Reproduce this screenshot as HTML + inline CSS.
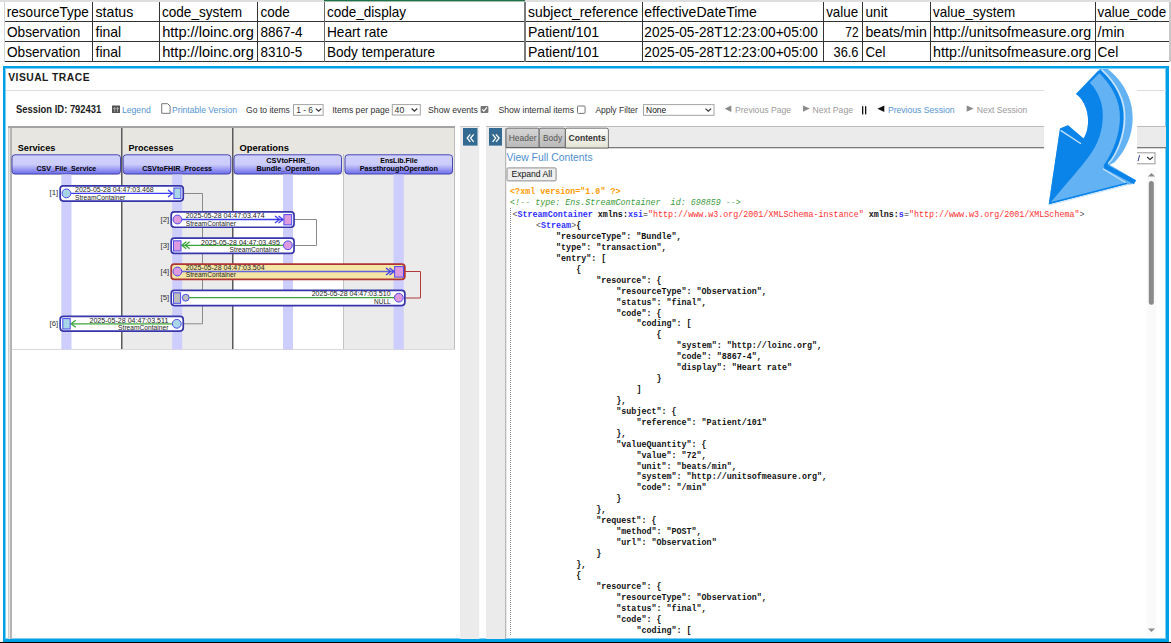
<!DOCTYPE html>
<html><head><meta charset="utf-8"><title>Visual Trace</title>
<style>html,body{margin:0;padding:0;background:#fff;overflow:hidden;} svg{display:block;}</style>
</head><body>
<svg width="1171" height="643" viewBox="0 0 1171 643" style="font-family:'Liberation Sans',sans-serif">
<rect x="0" y="0" width="1171" height="2" fill="#dedede"/>
<rect x="324" y="0" width="201" height="1.3" fill="#1e7145"/>
<rect x="4" y="21" width="1165" height="1" fill="#333333"/>
<rect x="4" y="41" width="1165" height="1" fill="#333333"/>
<rect x="4" y="61" width="1165" height="1" fill="#333333"/>
<rect x="4" y="2" width="1" height="60" fill="#d4d4d4"/>
<rect x="92" y="2" width="1" height="60" fill="#333333"/>
<rect x="159" y="2" width="1" height="60" fill="#333333"/>
<rect x="257" y="2" width="1" height="60" fill="#333333"/>
<rect x="642" y="2" width="1" height="60" fill="#333333"/>
<rect x="823" y="2" width="1" height="60" fill="#333333"/>
<rect x="862" y="2" width="1" height="60" fill="#333333"/>
<rect x="930" y="2" width="1" height="60" fill="#333333"/>
<rect x="1095" y="2" width="1" height="60" fill="#333333"/>
<rect x="324" y="2" width="1" height="60" fill="#6a6a6a"/>
<rect x="524" y="2" width="2" height="60" fill="#7a7a7a"/>
<rect x="1169" y="2" width="2" height="60" fill="#c8c8c8"/>
<text x="6.80" y="17.20" font-family="Liberation Sans" font-size="15" fill="#000" textLength="82.10" lengthAdjust="spacingAndGlyphs">resourceType</text>
<text x="95.50" y="17.20" font-family="Liberation Sans" font-size="15" fill="#000" textLength="37.80" lengthAdjust="spacingAndGlyphs">status</text>
<text x="161.90" y="17.20" font-family="Liberation Sans" font-size="15" fill="#000" textLength="80.20" lengthAdjust="spacingAndGlyphs">code_system</text>
<text x="260.50" y="17.20" font-family="Liberation Sans" font-size="15" fill="#000" textLength="29.30" lengthAdjust="spacingAndGlyphs">code</text>
<text x="326.90" y="17.20" font-family="Liberation Sans" font-size="15" fill="#000" textLength="79.10" lengthAdjust="spacingAndGlyphs">code_display</text>
<text x="528.00" y="17.20" font-family="Liberation Sans" font-size="15" fill="#000" textLength="110.30" lengthAdjust="spacingAndGlyphs">subject_reference</text>
<text x="644.30" y="17.20" font-family="Liberation Sans" font-size="15" fill="#000" textLength="112.60" lengthAdjust="spacingAndGlyphs">effectiveDateTime</text>
<text x="826.20" y="17.20" font-family="Liberation Sans" font-size="15" fill="#000" textLength="31.90" lengthAdjust="spacingAndGlyphs">value</text>
<text x="865.50" y="17.20" font-family="Liberation Sans" font-size="15" fill="#000" textLength="22.00" lengthAdjust="spacingAndGlyphs">unit</text>
<text x="933.10" y="17.20" font-family="Liberation Sans" font-size="15" fill="#000" textLength="82.10" lengthAdjust="spacingAndGlyphs">value_system</text>
<text x="1097.60" y="17.20" font-family="Liberation Sans" font-size="15" fill="#000" textLength="68.60" lengthAdjust="spacingAndGlyphs">value_code</text>
<text x="7.00" y="36.60" font-family="Liberation Sans" font-size="15" fill="#000" textLength="73.40" lengthAdjust="spacingAndGlyphs">Observation</text>
<text x="95.50" y="36.60" font-family="Liberation Sans" font-size="15" fill="#000" textLength="25.70" lengthAdjust="spacingAndGlyphs">final</text>
<text x="162.20" y="36.60" font-family="Liberation Sans" font-size="15" fill="#000" textLength="91.60" lengthAdjust="spacingAndGlyphs">http://loinc.org</text>
<text x="260.50" y="36.60" font-family="Liberation Sans" font-size="15" fill="#000" textLength="42.10" lengthAdjust="spacingAndGlyphs">8867-4</text>
<text x="326.90" y="36.60" font-family="Liberation Sans" font-size="15" fill="#000" textLength="60.90" lengthAdjust="spacingAndGlyphs">Heart rate</text>
<text x="528.00" y="36.60" font-family="Liberation Sans" font-size="15" fill="#000" textLength="71.10" lengthAdjust="spacingAndGlyphs">Patient/101</text>
<text x="644.30" y="36.60" font-family="Liberation Sans" font-size="15" fill="#000" textLength="173.50" lengthAdjust="spacingAndGlyphs">2025-05-28T12:23:00+05:00</text>
<text x="845.30" y="36.60" font-family="Liberation Sans" font-size="15" fill="#000" textLength="13.20" lengthAdjust="spacingAndGlyphs">72</text>
<text x="865.50" y="36.60" font-family="Liberation Sans" font-size="15" fill="#000" textLength="61.30" lengthAdjust="spacingAndGlyphs">beats/min</text>
<text x="933.10" y="36.60" font-family="Liberation Sans" font-size="15" fill="#000" textLength="158.10" lengthAdjust="spacingAndGlyphs">http://unitsofmeasure.org</text>
<text x="1097.60" y="36.60" font-family="Liberation Sans" font-size="15" fill="#000" textLength="26.90" lengthAdjust="spacingAndGlyphs">/min</text>
<text x="7.00" y="56.50" font-family="Liberation Sans" font-size="15" fill="#000" textLength="73.40" lengthAdjust="spacingAndGlyphs">Observation</text>
<text x="95.50" y="56.50" font-family="Liberation Sans" font-size="15" fill="#000" textLength="25.70" lengthAdjust="spacingAndGlyphs">final</text>
<text x="162.20" y="56.50" font-family="Liberation Sans" font-size="15" fill="#000" textLength="91.60" lengthAdjust="spacingAndGlyphs">http://loinc.org</text>
<text x="260.50" y="56.50" font-family="Liberation Sans" font-size="15" fill="#000" textLength="41.70" lengthAdjust="spacingAndGlyphs">8310-5</text>
<text x="326.90" y="56.50" font-family="Liberation Sans" font-size="15" fill="#000" textLength="108.20" lengthAdjust="spacingAndGlyphs">Body temperature</text>
<text x="528.00" y="56.50" font-family="Liberation Sans" font-size="15" fill="#000" textLength="71.10" lengthAdjust="spacingAndGlyphs">Patient/101</text>
<text x="644.30" y="56.50" font-family="Liberation Sans" font-size="15" fill="#000" textLength="173.50" lengthAdjust="spacingAndGlyphs">2025-05-28T12:23:00+05:00</text>
<text x="833.50" y="56.50" font-family="Liberation Sans" font-size="15" fill="#000" textLength="25.00" lengthAdjust="spacingAndGlyphs">36.6</text>
<text x="865.50" y="56.50" font-family="Liberation Sans" font-size="15" fill="#000" textLength="20.00" lengthAdjust="spacingAndGlyphs">Cel</text>
<text x="933.10" y="56.50" font-family="Liberation Sans" font-size="15" fill="#000" textLength="158.10" lengthAdjust="spacingAndGlyphs">http://unitsofmeasure.org</text>
<text x="1097.60" y="56.50" font-family="Liberation Sans" font-size="15" fill="#000" textLength="20.70" lengthAdjust="spacingAndGlyphs">Cel</text>
<rect x="0" y="642" width="1171" height="1" fill="#000"/>
<rect x="3" y="66" width="1166" height="2" fill="#00a0e6"/>
<rect x="5" y="68" width="1161" height="1" fill="#7fcdf2"/>
<rect x="3" y="66" width="2" height="576" fill="#00a0e6"/>
<rect x="5" y="68" width="1" height="571" fill="#7fcdf2"/>
<rect x="1166" y="66" width="3" height="576" fill="#00a0e6"/>
<rect x="1165" y="68" width="1" height="571" fill="#7fcdf2"/>
<rect x="3" y="639" width="1166" height="3" fill="#00a0e6"/>
<rect x="5" y="638" width="1161" height="1" fill="#7fcdf2"/>
<text x="8.2" y="81.0" font-family="Liberation Sans" font-size="10.3" font-weight="bold" fill="#1a1a1a" textLength="81.3" lengthAdjust="spacing">VISUAL TRACE</text>
<rect x="6" y="90" width="1160" height="1" fill="#dddddd"/>
<text x="16.00" y="112.90" font-family="Liberation Sans" font-size="10.1" fill="#222" font-weight="bold" textLength="85.30" lengthAdjust="spacingAndGlyphs">Session ID: 792431</text>
<rect x="112" y="105.5" width="8" height="7.5" fill="#555"/>
<rect x="114.5" y="107" width="0.6" height="5" fill="#ccc"/>
<rect x="117" y="107" width="0.6" height="5" fill="#ccc"/>
<rect x="112.8" y="108.5" width="6.4" height="0.6" fill="#ccc"/>
<text x="121.90" y="112.90" font-family="Liberation Sans" font-size="9.3" fill="#5594d2" textLength="28.90" lengthAdjust="spacingAndGlyphs">Legend</text>
<path d="M161.7,103.7 h6 l2.4,2.4 v7.2 h-8.4 z" fill="#fff" stroke="#777" stroke-width="1"/>
<text x="172.10" y="112.90" font-family="Liberation Sans" font-size="9.3" fill="#5594d2" textLength="64.90" lengthAdjust="spacingAndGlyphs">Printable Version</text>
<text x="246.10" y="112.90" font-family="Liberation Sans" font-size="9.3" fill="#333" textLength="43.80" lengthAdjust="spacingAndGlyphs">Go to items</text>
<rect x="293.5" y="104.6" width="29.600000000000023" height="10.700000000000003" fill="#fff" stroke="#a4a4a4" stroke-width="1"/>
<text x="296.20" y="112.90" font-family="Liberation Sans" font-size="9.3" fill="#333" textLength="16.80" lengthAdjust="spacingAndGlyphs">1 - 6</text>
<path d="M315.8,108.64999999999999 L318.6,111.24999999999999 L321.40000000000003,108.64999999999999" fill="none" stroke="#333" stroke-width="1.2"/>
<text x="332.20" y="112.90" font-family="Liberation Sans" font-size="9.3" fill="#333" textLength="57.40" lengthAdjust="spacingAndGlyphs">Items per page</text>
<rect x="392.3" y="104.6" width="28.0" height="10.400000000000006" fill="#fff" stroke="#a4a4a4" stroke-width="1"/>
<text x="394.60" y="112.90" font-family="Liberation Sans" font-size="9.3" fill="#333" textLength="9.70" lengthAdjust="spacingAndGlyphs">40</text>
<path d="M411.59999999999997,108.5 L414.4,111.1 L417.2,108.5" fill="none" stroke="#333" stroke-width="1.2"/>
<text x="428.00" y="112.90" font-family="Liberation Sans" font-size="9.3" fill="#333" textLength="49.90" lengthAdjust="spacingAndGlyphs">Show events</text>
<rect x="480.6" y="105.9" width="7.8" height="7.2" rx="1" fill="#767676"/>
<path d="M482.2,109.4 L483.8,111.2 L486.9,107.3" fill="none" stroke="#fff" stroke-width="1.1"/>
<text x="498.40" y="112.90" font-family="Liberation Sans" font-size="9.3" fill="#333" textLength="75.60" lengthAdjust="spacingAndGlyphs">Show internal items</text>
<rect x="577.5" y="106" width="7.6" height="7.4" rx="1" fill="#fff" stroke="#767676" stroke-width="1"/>
<text x="595.40" y="112.90" font-family="Liberation Sans" font-size="9.3" fill="#333" textLength="42.40" lengthAdjust="spacingAndGlyphs">Apply Filter</text>
<rect x="643.5" y="104.6" width="70.5" height="10.700000000000003" fill="#fff" stroke="#a4a4a4" stroke-width="1"/>
<text x="646.10" y="112.90" font-family="Liberation Sans" font-size="9.3" fill="#111" textLength="20.10" lengthAdjust="spacingAndGlyphs">None</text>
<path d="M705.5,108.64999999999999 L708.3,111.24999999999999 L711.0999999999999,108.64999999999999" fill="none" stroke="#333" stroke-width="1.2"/>
<path d="M724.7,108.8 L731.3,105.6 L731.3,112 z" fill="#8a8a8a"/>
<text x="735.00" y="112.90" font-family="Liberation Sans" font-size="9.3" fill="#9a9a9a" textLength="56.00" lengthAdjust="spacingAndGlyphs">Previous Page</text>
<path d="M809.8,108.6 L803,105.4 L803,111.8 z" fill="#8a8a8a"/>
<text x="812.50" y="112.90" font-family="Liberation Sans" font-size="9.3" fill="#9a9a9a" textLength="40.60" lengthAdjust="spacingAndGlyphs">Next Page</text>
<rect x="862" y="106.2" width="1.3" height="8.2" fill="#111"/>
<rect x="865" y="106.2" width="1.3" height="8.2" fill="#111"/>
<path d="M877.4,108.8 L884.3,105.6 L884.3,112 z" fill="#111"/>
<text x="887.90" y="112.90" font-family="Liberation Sans" font-size="9.3" fill="#5594d2" textLength="66.60" lengthAdjust="spacingAndGlyphs">Previous Session</text>
<path d="M973.6,108.6 L966.7,105.4 L966.7,111.8 z" fill="#8a8a8a"/>
<text x="976.70" y="112.90" font-family="Liberation Sans" font-size="9.3" fill="#9a9a9a" textLength="50.60" lengthAdjust="spacingAndGlyphs">Next Session</text>
<rect x="8" y="126" width="1" height="513" fill="#cccccc"/>
<rect x="9" y="128" width="1" height="511" fill="#e6e6e6"/>
<rect x="10" y="128" width="2" height="511" fill="#b4b4b4"/>
<rect x="8" y="126" width="447" height="2" fill="#a4a4a4"/>
<rect x="12" y="128" width="442" height="47" fill="#e8e6e1"/>
<rect x="122" y="175" width="110" height="174.5" fill="#ebebeb"/>
<rect x="344" y="175" width="110" height="174.5" fill="#ebebeb"/>
<rect x="343" y="154" width="1" height="195.5" fill="#c4c4c4"/>
<rect x="121" y="128" width="1.5" height="221.5" fill="#5a5a5a"/>
<rect x="232" y="128" width="1.5" height="221.5" fill="#5a5a5a"/>
<rect x="454" y="128" width="1" height="221.5" fill="#bdbdbd"/>
<rect x="12" y="349" width="442" height="1" fill="#dadada"/>
<text x="17.80" y="151.00" font-family="Liberation Sans" font-size="9" fill="#000" font-weight="bold" textLength="37.50" lengthAdjust="spacingAndGlyphs">Services</text>
<text x="128.40" y="151.00" font-family="Liberation Sans" font-size="9" fill="#000" font-weight="bold" textLength="45.00" lengthAdjust="spacingAndGlyphs">Processes</text>
<text x="239.50" y="151.00" font-family="Liberation Sans" font-size="9" fill="#000" font-weight="bold" textLength="49.40" lengthAdjust="spacingAndGlyphs">Operations</text>
<defs><linearGradient id="bx" x1="0" y1="0" x2="0" y2="1"><stop offset="0" stop-color="#d0d0fc"/><stop offset="0.5" stop-color="#cdcdfc"/><stop offset="1" stop-color="#6c6cec"/></linearGradient></defs>
<rect x="12.0" y="154.8" width="108.5" height="19.2" rx="3" fill="url(#bx)" stroke="#4646b4" stroke-width="1"/>
<rect x="123.2" y="154.8" width="107.60000000000001" height="19.2" rx="3" fill="url(#bx)" stroke="#4646b4" stroke-width="1"/>
<rect x="234.0" y="154.8" width="107.5" height="19.2" rx="3" fill="url(#bx)" stroke="#4646b4" stroke-width="1"/>
<rect x="345.0" y="154.8" width="107.5" height="19.2" rx="3" fill="url(#bx)" stroke="#4646b4" stroke-width="1"/>
<text x="36.50" y="171.00" font-family="Liberation Sans" font-size="7.6" fill="#000" font-weight="bold" textLength="59.80" lengthAdjust="spacingAndGlyphs">CSV_File_Service</text>
<text x="142.20" y="171.00" font-family="Liberation Sans" font-size="7.6" fill="#000" font-weight="bold" textLength="69.90" lengthAdjust="spacingAndGlyphs">CSVtoFHIR_Process</text>
<text x="266.30" y="162.90" font-family="Liberation Sans" font-size="7.6" fill="#000" font-weight="bold" textLength="43.30" lengthAdjust="spacingAndGlyphs">CSVtoFHIR_</text>
<text x="256.50" y="171.00" font-family="Liberation Sans" font-size="7.6" fill="#000" font-weight="bold" textLength="63.30" lengthAdjust="spacingAndGlyphs">Bundle_Operation</text>
<text x="380.30" y="162.90" font-family="Liberation Sans" font-size="7.6" fill="#000" font-weight="bold" textLength="37.30" lengthAdjust="spacingAndGlyphs">EnsLib.File</text>
<text x="359.70" y="171.00" font-family="Liberation Sans" font-size="7.6" fill="#000" font-weight="bold" textLength="78.20" lengthAdjust="spacingAndGlyphs">PassthroughOperation</text>
<rect x="61.3" y="174.5" width="10.2" height="175" fill="#cecefe"/>
<rect x="172.2" y="174.5" width="10.0" height="175" fill="#cecefe"/>
<rect x="283" y="174.5" width="10" height="175" fill="#cecefe"/>
<rect x="393.5" y="174.5" width="10.3" height="175" fill="#cecefe"/>
<path d="M183,193.5 H202.5 V323.8 H183" fill="none" stroke="#8a8a8a" stroke-width="1"/>
<path d="M294,219.5 H316.5 V245.5 H294" fill="none" stroke="#8a8a8a" stroke-width="1"/>
<path d="M405,271.5 H420.5 V298 H405" fill="none" stroke="#b23a3a" stroke-width="1"/>
<rect x="60.150000000000006" y="185.85" width="123.09999999999998" height="15.199999999999994" rx="3.2" fill="#fff" stroke="#3636aa" stroke-width="1.7"/>
<path d="M71,193.4 H172.5" stroke="#3d3df0" stroke-width="1.3" fill="none"/>
<path d="M168.0,189.9 L172.5,193.4 L168.0,196.9" stroke="#3d3df0" stroke-width="1.3" fill="none"/>
<circle cx="66.4" cy="193.4" r="4.4" fill="#a9d6e6" stroke="#4a4af0" stroke-width="1"/>
<rect x="173.9" y="188.0" width="7.0" height="10.599999999999994" fill="#a9d6e6" stroke="#4a4af0" stroke-width="1"/>
<text x="75.00" y="192.10" font-family="Liberation Sans" font-size="7.9" fill="#222" textLength="78.70" lengthAdjust="spacingAndGlyphs">2025-05-28 04:47:03.468</text>
<text x="75.00" y="199.50" font-family="Liberation Sans" font-size="7.9" fill="#222" textLength="50.30" lengthAdjust="spacingAndGlyphs">StreamContainer</text>
<text x="49.50" y="195.40" font-family="Liberation Sans" font-size="7.9" fill="#333" textLength="8.70" lengthAdjust="spacingAndGlyphs">[1]</text>
<rect x="171.2" y="211.95" width="122.85" height="15.299999999999988" rx="3.2" fill="#fff" stroke="#3636aa" stroke-width="1.7"/>
<path d="M182,219.5 H283" stroke="#3d3df0" stroke-width="1.3" fill="none"/>
<path d="M278.5,216.0 L283,219.5 L278.5,223.0" stroke="#3d3df0" stroke-width="1.3" fill="none"/>
<path d="M275,216.0 L279.5,219.5 L275,223.0" stroke="#3d3df0" stroke-width="1.3" fill="none"/>
<circle cx="177.4" cy="219.5" r="4.4" fill="#de9ade" stroke="#4a4af0" stroke-width="1"/>
<rect x="283.9" y="214.6" width="7.800000000000011" height="10.300000000000011" fill="#de9ade" stroke="#4a4af0" stroke-width="1"/>
<text x="185.70" y="218.40" font-family="Liberation Sans" font-size="7.9" fill="#222" textLength="78.90" lengthAdjust="spacingAndGlyphs">2025-05-28 04:47:03.474</text>
<text x="185.70" y="225.60" font-family="Liberation Sans" font-size="7.9" fill="#222" textLength="50.30" lengthAdjust="spacingAndGlyphs">StreamContainer</text>
<text x="160.50" y="221.60" font-family="Liberation Sans" font-size="7.9" fill="#333" textLength="8.70" lengthAdjust="spacingAndGlyphs">[2]</text>
<rect x="171.2" y="238.14999999999998" width="122.85" height="15.200000000000022" rx="3.2" fill="#fff" stroke="#3636aa" stroke-width="1.7"/>
<path d="M181.5,245.3 H283" stroke="#3aa63a" stroke-width="1.3" fill="none"/>
<path d="M186.3,241.8 L181.8,245.3 L186.3,248.8" stroke="#3aa63a" stroke-width="1.3" fill="none"/>
<path d="M189.8,241.8 L185.3,245.3 L189.8,248.8" stroke="#3aa63a" stroke-width="1.3" fill="none"/>
<rect x="173.5" y="240.8" width="7.5" height="10.199999999999989" fill="#de9ade" stroke="#4a4af0" stroke-width="1"/>
<circle cx="287.9" cy="245.3" r="4.4" fill="#de9ade" stroke="#4a4af0" stroke-width="1"/>
<text x="279.90" y="244.60" font-family="Liberation Sans" font-size="7.9" fill="#222" text-anchor="end" textLength="78.9" lengthAdjust="spacingAndGlyphs">2025-05-28 04:47:03.495</text>
<text x="279.90" y="252.30" font-family="Liberation Sans" font-size="7.9" fill="#222" text-anchor="end" textLength="50.3" lengthAdjust="spacingAndGlyphs">StreamContainer</text>
<text x="160.50" y="247.60" font-family="Liberation Sans" font-size="7.9" fill="#333" textLength="8.70" lengthAdjust="spacingAndGlyphs">[3]</text>
<rect x="171.2" y="264.15" width="233.65" height="15.200000000000022" rx="3.2" fill="#f4e6a4" stroke="#b03434" stroke-width="1.7"/>
<path d="M182,271.5 H394" stroke="#6464dc" stroke-width="1.3" fill="none"/>
<path d="M389.5,268.0 L394,271.5 L389.5,275.0" stroke="#3d3df0" stroke-width="1.3" fill="none"/>
<path d="M386,268.0 L390.5,271.5 L386,275.0" stroke="#3d3df0" stroke-width="1.3" fill="none"/>
<circle cx="177.4" cy="271.5" r="4.4" fill="#de9ade" stroke="#4a4af0" stroke-width="1"/>
<rect x="394.6" y="266.6" width="8.899999999999977" height="10.5" fill="#de9ade" stroke="#4a4af0" stroke-width="1"/>
<text x="185.70" y="270.20" font-family="Liberation Sans" font-size="7.9" fill="#222" textLength="78.90" lengthAdjust="spacingAndGlyphs">2025-05-28 04:47:03.504</text>
<text x="185.70" y="277.20" font-family="Liberation Sans" font-size="7.9" fill="#222" textLength="50.30" lengthAdjust="spacingAndGlyphs">StreamContainer</text>
<text x="160.50" y="273.80" font-family="Liberation Sans" font-size="7.9" fill="#333" textLength="8.70" lengthAdjust="spacingAndGlyphs">[4]</text>
<rect x="171.2" y="290.45" width="233.65" height="15.1" rx="3.2" fill="#fff" stroke="#3636aa" stroke-width="1.7"/>
<path d="M189,297.7 H394" stroke="#3aa63a" stroke-width="1.3" fill="none"/>
<rect x="173.5" y="292.8" width="7.099999999999994" height="10.5" fill="#bdbdbd" stroke="#4a4af0" stroke-width="1"/>
<circle cx="185.7" cy="297.7" r="3.4" fill="#bdbdbd" stroke="#4a4af0" stroke-width="1"/>
<circle cx="398.8" cy="297.7" r="4.4" fill="#de9ade" stroke="#4a4af0" stroke-width="1"/>
<text x="390.60" y="296.40" font-family="Liberation Sans" font-size="7.9" fill="#222" text-anchor="end" textLength="78.9" lengthAdjust="spacingAndGlyphs">2025-05-28 04:47:03.510</text>
<text x="390.60" y="304.00" font-family="Liberation Sans" font-size="7.9" fill="#222" text-anchor="end" textLength="16.5" lengthAdjust="spacingAndGlyphs">NULL</text>
<text x="160.50" y="299.60" font-family="Liberation Sans" font-size="7.9" fill="#333" textLength="8.70" lengthAdjust="spacingAndGlyphs">[5]</text>
<rect x="60.150000000000006" y="316.45" width="123.09999999999998" height="14.6" rx="3.2" fill="#fff" stroke="#3636aa" stroke-width="1.7"/>
<path d="M71,323.8 H172" stroke="#3aa63a" stroke-width="1.3" fill="none"/>
<path d="M75.7,320.3 L71.2,323.8 L75.7,327.3" stroke="#3aa63a" stroke-width="1.3" fill="none"/>
<rect x="62.8" y="318.6" width="7.400000000000006" height="10.399999999999977" fill="#a9d6e6" stroke="#4a4af0" stroke-width="1"/>
<circle cx="176.8" cy="323.8" r="4.4" fill="#a9d6e6" stroke="#4a4af0" stroke-width="1"/>
<text x="168.40" y="322.50" font-family="Liberation Sans" font-size="7.9" fill="#222" text-anchor="end" textLength="78.9" lengthAdjust="spacingAndGlyphs">2025-05-28 04:47:03.511</text>
<text x="168.40" y="330.20" font-family="Liberation Sans" font-size="7.9" fill="#222" text-anchor="end" textLength="50.3" lengthAdjust="spacingAndGlyphs">StreamContainer</text>
<text x="49.50" y="325.90" font-family="Liberation Sans" font-size="7.9" fill="#333" textLength="8.60" lengthAdjust="spacingAndGlyphs">[6]</text>
<rect x="460" y="126" width="19.2" height="513" fill="#ebebeb"/>
<rect x="460" y="126" width="19.2" height="1" fill="#c8c8c8"/>
<rect x="463" y="128" width="14.5" height="17.6" fill="#326a91"/>
<path d="M470.3,134.4 L467.2,138.1 L470.3,141.8 M473.7,134.4 L470.6,138.1 L473.7,141.8" fill="none" stroke="#fff" stroke-width="1.3"/>
<rect x="486" y="126" width="19.5" height="513" fill="#ebebeb"/>
<rect x="486" y="126" width="19.5" height="1" fill="#c8c8c8"/>
<rect x="489" y="128" width="13" height="17.6" fill="#326a91"/>
<path d="M492.6,134.4 L495.7,138.1 L492.6,141.8 M496,134.4 L499.1,138.1 L496,141.8" fill="none" stroke="#fff" stroke-width="1.3"/>
<rect x="505.2" y="128" width="1" height="511" fill="#a8a8a8"/>
<rect x="506" y="126" width="660" height="21" fill="#ebebeb"/>
<rect x="486" y="126" width="680" height="1" fill="#bcbcbc"/>
<rect x="506" y="147" width="660" height="1.3" fill="#7a7a7a"/>
<defs><linearGradient id="tg" x1="0" y1="0" x2="0" y2="1"><stop offset="0" stop-color="#d6d6d6"/><stop offset="1" stop-color="#b9b9b9"/></linearGradient><linearGradient id="tc" x1="0" y1="0" x2="0" y2="1"><stop offset="0" stop-color="#fbfbfb"/><stop offset="1" stop-color="#e4e4d4"/></linearGradient></defs>
<path d="M506,147.5 V130 Q506,128.2 508,128.2 H537.5 Q539.2,128.2 539.2,130 V147.5 Z" fill="url(#tg)" stroke="#555" stroke-width="0.8"/>
<path d="M539.2,147.5 V130 Q539.2,128.2 541,128.2 H563.6 Q565.4,128.2 565.4,130 V147.5 Z" fill="url(#tg)" stroke="#555" stroke-width="0.8"/>
<path d="M565.4,148 V130 Q565.4,128.2 567.2,128.2 H606.6 Q608.4,128.2 608.4,130 V148 Z" fill="url(#tc)" stroke="#555" stroke-width="0.8"/>
<text x="508.70" y="140.70" font-family="Liberation Sans" font-size="8.6" fill="#555" textLength="27.80" lengthAdjust="spacingAndGlyphs">Header</text>
<text x="543.00" y="140.70" font-family="Liberation Sans" font-size="8.6" fill="#555" textLength="19.10" lengthAdjust="spacingAndGlyphs">Body</text>
<text x="568.60" y="140.90" font-family="Liberation Sans" font-size="8.6" fill="#333" font-weight="bold" textLength="37.10" lengthAdjust="spacingAndGlyphs">Contents</text>
<text x="506.50" y="161.40" font-family="Liberation Sans" font-size="10.6" fill="#4f8fd0" textLength="86.10" lengthAdjust="spacingAndGlyphs">View Full Contents</text>
<rect x="507" y="167.9" width="49.1" height="13" rx="1.2" fill="#efefef" stroke="#8c8c8c" stroke-width="1"/>
<text x="511.40" y="176.70" font-family="Liberation Sans" font-size="8.6" fill="#111" textLength="40.70" lengthAdjust="spacingAndGlyphs">Expand All</text>
<text x="510.10" y="194.40" font-family="Liberation Mono" font-size="8.37" xml:space="preserve"><tspan fill="#ff9a00" font-weight="bold">&lt;?xml version=&quot;1.0&quot; ?&gt;</tspan></text>
<text x="510.10" y="204.80" font-family="Liberation Mono" font-size="8.37" xml:space="preserve"><tspan fill="#3a9a3a" font-style="italic">&lt;!-- type: Ens.StreamContainer  id: 698859 --&gt;</tspan></text>
<text x="512.50" y="216.90" font-family="Liberation Mono" font-size="8.37" xml:space="preserve"><tspan fill="#555">&lt;</tspan><tspan fill="#3030ff" font-weight="bold">StreamContainer</tspan><tspan fill="#111" font-weight="bold"> xmlns:</tspan><tspan fill="#3030ff" font-weight="bold">xsi</tspan><tspan fill="#111">=</tspan><tspan fill="#ff3030">&quot;http://www.w3.org/2001/XMLSchema-instance&quot;</tspan><tspan fill="#111" font-weight="bold"> xmlns:</tspan><tspan fill="#3030ff" font-weight="bold">s</tspan><tspan fill="#111">=</tspan><tspan fill="#ff3030">&quot;http://www.w3.org/2001/XMLSchema&quot;</tspan><tspan fill="#555">&gt;</tspan></text>
<text x="536.00" y="228.10" font-family="Liberation Mono" font-size="8.37" xml:space="preserve"><tspan fill="#555">&lt;</tspan><tspan fill="#3030ff" font-weight="bold">Stream</tspan><tspan fill="#555">&gt;</tspan><tspan fill="#111" font-weight="bold">{</tspan></text>
<text x="556.08" y="239.03" font-family="Liberation Mono" font-size="8.37" xml:space="preserve"><tspan fill="#111" font-weight="bold">&quot;resourceType&quot;: &quot;Bundle&quot;,</tspan></text>
<text x="556.08" y="249.96" font-family="Liberation Mono" font-size="8.37" xml:space="preserve"><tspan fill="#111" font-weight="bold">&quot;type&quot;: &quot;transaction&quot;,</tspan></text>
<text x="556.08" y="260.89" font-family="Liberation Mono" font-size="8.37" xml:space="preserve"><tspan fill="#111" font-weight="bold">&quot;entry&quot;: [</tspan></text>
<text x="576.16" y="271.82" font-family="Liberation Mono" font-size="8.37" xml:space="preserve"><tspan fill="#111" font-weight="bold">{</tspan></text>
<text x="596.24" y="282.75" font-family="Liberation Mono" font-size="8.37" xml:space="preserve"><tspan fill="#111" font-weight="bold">&quot;resource&quot;: {</tspan></text>
<text x="616.32" y="293.68" font-family="Liberation Mono" font-size="8.37" xml:space="preserve"><tspan fill="#111" font-weight="bold">&quot;resourceType&quot;: &quot;Observation&quot;,</tspan></text>
<text x="616.32" y="304.61" font-family="Liberation Mono" font-size="8.37" xml:space="preserve"><tspan fill="#111" font-weight="bold">&quot;status&quot;: &quot;final&quot;,</tspan></text>
<text x="616.32" y="315.54" font-family="Liberation Mono" font-size="8.37" xml:space="preserve"><tspan fill="#111" font-weight="bold">&quot;code&quot;: {</tspan></text>
<text x="636.40" y="326.47" font-family="Liberation Mono" font-size="8.37" xml:space="preserve"><tspan fill="#111" font-weight="bold">&quot;coding&quot;: [</tspan></text>
<text x="656.48" y="337.40" font-family="Liberation Mono" font-size="8.37" xml:space="preserve"><tspan fill="#111" font-weight="bold">{</tspan></text>
<text x="676.56" y="348.33" font-family="Liberation Mono" font-size="8.37" xml:space="preserve"><tspan fill="#111" font-weight="bold">&quot;system&quot;: &quot;http://loinc.org&quot;,</tspan></text>
<text x="676.56" y="359.26" font-family="Liberation Mono" font-size="8.37" xml:space="preserve"><tspan fill="#111" font-weight="bold">&quot;code&quot;: &quot;8867-4&quot;,</tspan></text>
<text x="676.56" y="370.19" font-family="Liberation Mono" font-size="8.37" xml:space="preserve"><tspan fill="#111" font-weight="bold">&quot;display&quot;: &quot;Heart rate&quot;</tspan></text>
<text x="656.48" y="381.12" font-family="Liberation Mono" font-size="8.37" xml:space="preserve"><tspan fill="#111" font-weight="bold">}</tspan></text>
<text x="636.40" y="392.05" font-family="Liberation Mono" font-size="8.37" xml:space="preserve"><tspan fill="#111" font-weight="bold">]</tspan></text>
<text x="616.32" y="402.98" font-family="Liberation Mono" font-size="8.37" xml:space="preserve"><tspan fill="#111" font-weight="bold">},</tspan></text>
<text x="616.32" y="413.91" font-family="Liberation Mono" font-size="8.37" xml:space="preserve"><tspan fill="#111" font-weight="bold">&quot;subject&quot;: {</tspan></text>
<text x="636.40" y="424.84" font-family="Liberation Mono" font-size="8.37" xml:space="preserve"><tspan fill="#111" font-weight="bold">&quot;reference&quot;: &quot;Patient/101&quot;</tspan></text>
<text x="616.32" y="435.77" font-family="Liberation Mono" font-size="8.37" xml:space="preserve"><tspan fill="#111" font-weight="bold">},</tspan></text>
<text x="616.32" y="446.70" font-family="Liberation Mono" font-size="8.37" xml:space="preserve"><tspan fill="#111" font-weight="bold">&quot;valueQuantity&quot;: {</tspan></text>
<text x="636.40" y="457.63" font-family="Liberation Mono" font-size="8.37" xml:space="preserve"><tspan fill="#111" font-weight="bold">&quot;value&quot;: &quot;72&quot;,</tspan></text>
<text x="636.40" y="468.56" font-family="Liberation Mono" font-size="8.37" xml:space="preserve"><tspan fill="#111" font-weight="bold">&quot;unit&quot;: &quot;beats/min&quot;,</tspan></text>
<text x="636.40" y="479.49" font-family="Liberation Mono" font-size="8.37" xml:space="preserve"><tspan fill="#111" font-weight="bold">&quot;system&quot;: &quot;http://unitsofmeasure.org&quot;,</tspan></text>
<text x="636.40" y="490.42" font-family="Liberation Mono" font-size="8.37" xml:space="preserve"><tspan fill="#111" font-weight="bold">&quot;code&quot;: &quot;/min&quot;</tspan></text>
<text x="616.32" y="501.35" font-family="Liberation Mono" font-size="8.37" xml:space="preserve"><tspan fill="#111" font-weight="bold">}</tspan></text>
<text x="596.24" y="512.28" font-family="Liberation Mono" font-size="8.37" xml:space="preserve"><tspan fill="#111" font-weight="bold">},</tspan></text>
<text x="596.24" y="523.21" font-family="Liberation Mono" font-size="8.37" xml:space="preserve"><tspan fill="#111" font-weight="bold">&quot;request&quot;: {</tspan></text>
<text x="616.32" y="534.14" font-family="Liberation Mono" font-size="8.37" xml:space="preserve"><tspan fill="#111" font-weight="bold">&quot;method&quot;: &quot;POST&quot;,</tspan></text>
<text x="616.32" y="545.07" font-family="Liberation Mono" font-size="8.37" xml:space="preserve"><tspan fill="#111" font-weight="bold">&quot;url&quot;: &quot;Observation&quot;</tspan></text>
<text x="596.24" y="556.00" font-family="Liberation Mono" font-size="8.37" xml:space="preserve"><tspan fill="#111" font-weight="bold">}</tspan></text>
<text x="576.16" y="566.93" font-family="Liberation Mono" font-size="8.37" xml:space="preserve"><tspan fill="#111" font-weight="bold">},</tspan></text>
<text x="576.16" y="577.86" font-family="Liberation Mono" font-size="8.37" xml:space="preserve"><tspan fill="#111" font-weight="bold">{</tspan></text>
<text x="596.24" y="588.79" font-family="Liberation Mono" font-size="8.37" xml:space="preserve"><tspan fill="#111" font-weight="bold">&quot;resource&quot;: {</tspan></text>
<text x="616.32" y="599.72" font-family="Liberation Mono" font-size="8.37" xml:space="preserve"><tspan fill="#111" font-weight="bold">&quot;resourceType&quot;: &quot;Observation&quot;,</tspan></text>
<text x="616.32" y="610.65" font-family="Liberation Mono" font-size="8.37" xml:space="preserve"><tspan fill="#111" font-weight="bold">&quot;status&quot;: &quot;final&quot;,</tspan></text>
<text x="616.32" y="621.58" font-family="Liberation Mono" font-size="8.37" xml:space="preserve"><tspan fill="#111" font-weight="bold">&quot;code&quot;: {</tspan></text>
<text x="636.40" y="632.51" font-family="Liberation Mono" font-size="8.37" xml:space="preserve"><tspan fill="#111" font-weight="bold">&quot;coding&quot;: [</tspan></text>
<path d="M510.5,208 V636" stroke="#8c8c8c" stroke-width="1" stroke-dasharray="1,1" fill="none"/>
<rect x="1146.8" y="168" width="9.3" height="468" fill="#fafafa"/>
<path d="M1148,176.6 L1155,176.6 L1151.5,172.9 z" fill="#8a8a8a"/>
<rect x="1148.8" y="181" width="5" height="123.7" rx="2.5" fill="#8a8a8a"/>
<path d="M1148,628.4 L1155,628.4 L1151.5,632.1 z" fill="#8a8a8a"/>
<rect x="1120.5" y="152.8" width="34.5" height="11" fill="#fff" stroke="#999" stroke-width="1"/>
<path d="M1147.2,157 L1150,159.6 L1152.8,157" fill="none" stroke="#222" stroke-width="1.1"/>
<path d="M1139.6,155.2 L1138,161.2" fill="none" stroke="#2a3a8a" stroke-width="1"/>
<rect x="1044" y="69" width="93" height="138" fill="#fff"/>
<path d="M1076,94 L1098.5,70.5 L1099.7,69 L1107.8,69 C1122,80 1133,98 1132.7,118.7 C1132.5,135 1126,150 1114.6,162.3 L1109.7,164.8 L1136.4,180.6 L1131,184.5 L1125.8,184.6 L1048.7,204.6 L1060,128.5 L1068,125.3 L1083.5,138.6 C1091,128 1090,104 1076,94 Z" fill="#63b2f3"/>
<path d="M1076,94 L1098.5,70.5 L1100.2,72.2 L1089.8,82.7 C1099,92 1103,104 1102.8,116 C1102.6,130 1099,142 1090,155 C1082,166 1068,182 1048.7,204.6 L1060,128.5 L1068,125.3 L1083.5,138.6 C1091,128 1090,104 1076,94 Z" fill="#0b84ea"/>
<path d="M1099.5,70.8 C1113,84 1122,100 1121.7,118 C1121.5,136 1114,154 1105,166.5" fill="none" stroke="#0b84ea" stroke-width="3.6"/>
<path d="M1104.5,166 L1135,182.3" fill="none" stroke="#0b84ea" stroke-width="4.4"/>
<path d="M1101.6,69.6 C1116,83 1125,100 1124.7,118 C1124.5,136 1117,154 1108.2,163.8" fill="none" stroke="#c6e3fd" stroke-width="1.6"/>
<path d="M1103,168.8 L1126.5,183.2" fill="none" stroke="#c6e3fd" stroke-width="1.2"/>
<path d="M1049.5,203.2 L1127,183.2" fill="none" stroke="#0b84ea" stroke-width="1.4"/>
<path d="M1049.5,205 L1127,185" fill="none" stroke="#c6e3fd" stroke-width="1"/>
<path d="M1060.6,130.4 L1081,143.8" fill="none" stroke="#c6e3fd" stroke-width="1.3"/>
</svg>
</body></html>
